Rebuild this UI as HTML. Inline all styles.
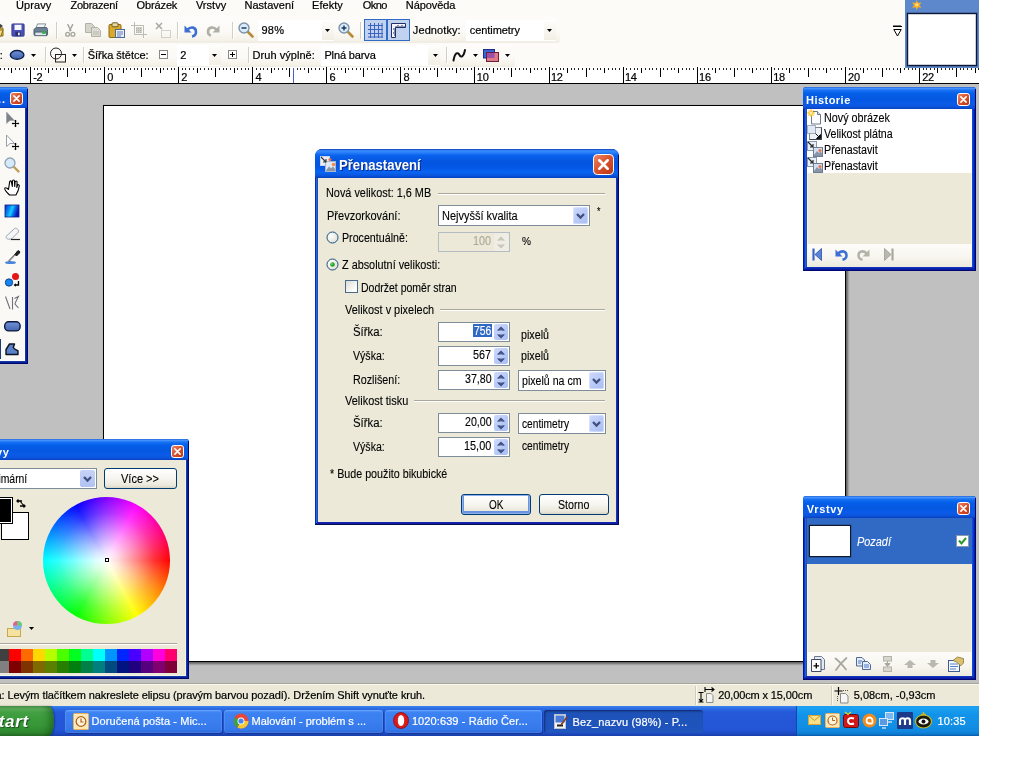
<!DOCTYPE html>
<html lang="cs"><head><meta charset="utf-8"><title>Paint.NET - Přenastavení</title>
<style>
html,body{margin:0;padding:0;background:#fff}
body{width:1024px;height:768px;position:relative;overflow:hidden;font-family:"Liberation Sans",sans-serif;font-size:11px;color:#000}
#bg{position:absolute;left:0;top:0;width:979px;height:736px;background:#c0c0c0}
#app{position:absolute;left:0;top:0;width:979px;height:736px;overflow:hidden;will-change:transform}
.a{position:absolute;box-sizing:border-box}
.t{position:absolute;white-space:nowrap}
.s{transform-origin:0 0}
svg{overflow:visible}
</style></head><body><div id="bg"></div><div id="app">
<div class="a" style="left:0px;top:0px;width:979px;height:67px;background:#fcfbf7;"></div>
<div class="a" style="left:0px;top:17px;width:560px;height:26px;background:linear-gradient(#fdfcfa 0%,#fbfaf6 55%,#f5f3ea 85%,#efede3 100%);border-radius:0 3px 3px 0;"></div>
<div class="a" style="left:0px;top:44px;width:515px;height:23px;background:linear-gradient(#fdfcfa 0%,#fbfaf6 55%,#f5f3ea 85%,#efede3 100%);border-radius:0 3px 3px 0;"></div>
<span class="t" style="left:15.97px;top:-2px;font-size:11px;line-height:14px;-webkit-text-stroke:0.2px;color:#000;letter-spacing:0.091px;">Úpravy</span>
<span class="t" style="left:70.45px;top:-2px;font-size:11px;line-height:14px;-webkit-text-stroke:0.2px;color:#000;letter-spacing:-0.235px;">Zobrazení</span>
<span class="t" style="left:136.52px;top:-2px;font-size:11px;line-height:14px;-webkit-text-stroke:0.2px;color:#000;letter-spacing:-0.119px;">Obrázek</span>
<span class="t" style="left:195.91px;top:-2px;font-size:11px;line-height:14px;-webkit-text-stroke:0.2px;color:#000;letter-spacing:0.024px;">Vrstvy</span>
<span class="t" style="left:244.5px;top:-2px;font-size:11px;line-height:14px;-webkit-text-stroke:0.2px;color:#000;letter-spacing:0.008px;">Nastavení</span>
<span class="t" style="left:312px;top:-2px;font-size:11px;line-height:14px;-webkit-text-stroke:0.2px;color:#000;letter-spacing:0.055px;">Efekty</span>
<span class="t" style="left:362.78px;top:-2px;font-size:11px;line-height:14px;-webkit-text-stroke:0.2px;color:#000;letter-spacing:-0.571px;">Okno</span>
<span class="t" style="left:405.75px;top:-2px;font-size:11px;line-height:14px;-webkit-text-stroke:0.2px;color:#000;letter-spacing:-0.061px;">Nápověda</span>
<svg class="a" style="left:-12px;top:22px;" width="16" height="16" viewBox="0 0 16 16"><path d="M1 4h5l1 2h8v8H1z" fill="#e8c44a" stroke="#8a6d1a"/><path d="M3 8h12l-2 6H1z" fill="#f6dc7a" stroke="#8a6d1a"/><path d="M11 1l4 3-4 3z" fill="#444"/></svg>
<svg class="a" style="left:11px;top:23px;" width="14" height="14" viewBox="0 0 16 16"><rect x="1" y="1" width="14" height="14" rx="1" fill="#4b4fb8" stroke="#34388f"/><rect x="4" y="2" width="8" height="6" fill="#f4f6fa"/><rect x="5" y="10" width="6" height="5" fill="#2b2e6e"/><rect x="8" y="11" width="2" height="3" fill="#e8e8f0"/></svg>
<svg class="a" style="left:33px;top:23px;" width="15.5" height="14.5" viewBox="0 0 17 16"><path d="M5 1h9l-2 5H3z" fill="#f2f4f6" stroke="#7b8794"/><path d="M1 7l3-2h11l1 2v6H1z" fill="#6d8196" stroke="#4a5c6e"/><rect x="2" y="10" width="13" height="4" fill="#dfe6ee" stroke="#4a5c6e"/><rect x="10" y="9" width="4" height="3" fill="#2fb24a"/></svg>
<div class="a" style="left:56px;top:22px;width:1px;height:17px;background:#d2cfc4;"></div>
<div class="a" style="left:57px;top:23px;width:1px;height:17px;background:#ffffff;"></div>
<svg class="a" style="left:64.5px;top:23.5px;" width="10.5" height="13.5" viewBox="0 0 12 15"><path d="M3 0l4 8M9 0L5 8" stroke="#a5a59b" stroke-width="1.6" fill="none"/><circle cx="3" cy="11.5" r="2.2" fill="none" stroke="#a5a59b" stroke-width="1.5"/><circle cx="9" cy="11.5" r="2.2" fill="none" stroke="#a5a59b" stroke-width="1.5"/></svg>
<svg class="a" style="left:85px;top:23px;" width="16" height="14" viewBox="0 0 16 14"><path d="M0.5 0.5h6l3 3v6h-9z" fill="#d6d5cc" stroke="#b2b1a7"/><path d="M6.5 4.5h6l3 3v6h-9z" fill="#dddcd3" stroke="#b2b1a7"/><path d="M8 9h6M8 11h6" stroke="#b9b8ae"/></svg>
<svg class="a" style="left:108px;top:22px;" width="17" height="16" viewBox="0 0 17 16"><rect x="1" y="2.5" width="12" height="13" rx="1" fill="#d9a928" stroke="#8e6b12"/><rect x="4" y="0.8" width="6" height="4" rx="1" fill="#e9d9a0" stroke="#6d5a2a"/><rect x="7.5" y="7.5" width="9" height="8" fill="#e8eef8" stroke="#4f6a96"/><path d="M9 10h6M9 12h6M9 14h4" stroke="#5f7fb5"/></svg>
<svg class="a" style="left:131px;top:22px;" width="16" height="16" viewBox="0 0 16 16"><path d="M3.5 0v12.5h12.5M0 3.5h12.5v12.5" stroke="#bdbcb2" fill="none" stroke-width="1"/><rect x="5" y="5" width="6" height="6" fill="#cfcec5"/><path d="M5 6.5h6M5 8.5h6M5 10.5h6" stroke="#b4b3a9" stroke-dasharray="1 1"/></svg>
<svg class="a" style="left:155px;top:22px;" width="16" height="16" viewBox="0 0 16 16"><path d="M1 1l6 6M7 1L1 7" stroke="#a9a89e" stroke-width="1.5"/><rect x="6.5" y="8.5" width="9" height="7" fill="none" stroke="#aaa99f" stroke-dasharray="1 1"/></svg>
<div class="a" style="left:177px;top:22px;width:1px;height:17px;background:#d2cfc4;"></div>
<div class="a" style="left:178px;top:23px;width:1px;height:17px;background:#ffffff;"></div>
<svg class="a" style="left:184px;top:23px;" width="14" height="14" viewBox="0 0 14 14"><path d="M3 7c4-4 9-3 9 2 0 2.5-1.5 4-4 4.5" fill="none" stroke="#3f6fd2" stroke-width="2.6"/><path d="M0.5 2.5v7h7z" fill="#3f6fd2"/></svg>
<svg class="a" style="left:206px;top:23px;" width="14" height="13" viewBox="0 0 14 13"><path d="M11 7C7 3 2 4 2 9c0 2 1 3 3 3.5" fill="none" stroke="#b0afa6" stroke-width="2.6"/><path d="M13.5 2.5v7h-7z" fill="#b0afa6"/></svg>
<div class="a" style="left:232px;top:22px;width:1px;height:17px;background:#d2cfc4;"></div>
<div class="a" style="left:233px;top:23px;width:1px;height:17px;background:#ffffff;"></div>
<svg class="a" style="left:238px;top:22px;" width="16" height="16" viewBox="0 0 16 16"><path d="M9.5 9.5l5 5" stroke="#b58a3a" stroke-width="2.6" stroke-linecap="round"/><circle cx="6" cy="6" r="5" fill="#d9ecfb" stroke="#7d93a8" stroke-width="1.4"/><path d="M3.5 6h5" stroke="#1c2d52" stroke-width="1.4"/></svg>
<div class="a" style="left:258px;top:20px;width:76px;height:21px;background:#ffffff;"></div>
<div class="a" style="left:322px;top:21px;width:12px;height:19px;background:linear-gradient(#fdfdfa,#f1efe5);"></div>
<span class="t" style="left:261.38px;top:23px;font-size:11px;line-height:14px;-webkit-text-stroke:0.2px;color:#000;letter-spacing:0.382px;">98%</span>
<svg class="a" style="left:325px;top:29px;" width="5" height="3" viewBox="0 0 5 3"><path d="M0 0h5L2.5 3z" fill="#000"/></svg>
<svg class="a" style="left:338px;top:22px;" width="16" height="16" viewBox="0 0 16 16"><path d="M9.5 9.5l5 5" stroke="#b58a3a" stroke-width="2.6" stroke-linecap="round"/><circle cx="6" cy="6" r="5" fill="#d9ecfb" stroke="#7d93a8" stroke-width="1.4"/><path d="M3.5 6h5" stroke="#1c2d52" stroke-width="1.4"/><path d="M6 3.5v5" stroke="#1c2d52" stroke-width="1.4"/></svg>
<div class="a" style="left:360px;top:22px;width:1px;height:17px;background:#d2cfc4;"></div>
<div class="a" style="left:361px;top:23px;width:1px;height:17px;background:#ffffff;"></div>
<div class="a" style="left:364px;top:19px;width:23px;height:22px;background:#c1d2ee;border:1px solid #316ac5;"></div>
<div class="a" style="left:387px;top:19px;width:23px;height:22px;background:#c1d2ee;border:1px solid #316ac5;"></div>
<svg class="a" style="left:368px;top:23px;" width="15" height="15" viewBox="0 0 15 15"><path d="M2.5 0v15M6.5 0v15M10.5 0v15M14 0v15M0 2.5h15M0 6.5h15M0 10.5h15M0 14h15" stroke="#3a62c0" stroke-width="1"/></svg>
<svg class="a" style="left:391px;top:23px;" width="15" height="15" viewBox="0 0 15 15"><path d="M0.5 0.5h14v4h-10v10h-4z" fill="#f4f6fb" stroke="#1f2f6a"/><path d="M5 3v1.5M7 2v2.5M9 3v1.5M11 2v2.5M13 3v1.5M2 6h2M3 8h1M2 10h2M3 12h1" stroke="#1f2f6a"/></svg>
<span class="t" style="left:412.82px;top:23px;font-size:11px;line-height:14px;-webkit-text-stroke:0.2px;color:#000;letter-spacing:0.098px;">Jednotky:</span>
<div class="a" style="left:466px;top:20px;width:90px;height:21px;background:#ffffff;"></div>
<div class="a" style="left:544px;top:21px;width:12px;height:19px;background:linear-gradient(#fdfdfa,#f1efe5);"></div>
<span class="t" style="left:469.79px;top:23px;font-size:11px;line-height:14px;-webkit-text-stroke:0.2px;color:#000;letter-spacing:-0.068px;">centimetry</span>
<svg class="a" style="left:547px;top:29px;" width="5" height="3" viewBox="0 0 5 3"><path d="M0 0h5L2.5 3z" fill="#000"/></svg>
<span class="t" style="left:-0.2px;top:48px;font-size:11px;line-height:14px;-webkit-text-stroke:0.2px;color:#000;">:</span>
<svg class="a" style="left:9px;top:49px;" width="17" height="12" viewBox="0 0 17 12"><defs><linearGradient id="gel" x1="0" y1="0" x2="0" y2="1"><stop offset="0" stop-color="#6f93d8"/><stop offset="1" stop-color="#3d5fa8"/></linearGradient></defs><ellipse cx="8.1" cy="5.9" rx="6.8" ry="4.4" fill="url(#gel)" stroke="#10204a" stroke-width="1.4"/></svg>
<svg class="a" style="left:31px;top:54px;" width="5" height="3" viewBox="0 0 5 3"><path d="M0 0h5L2.5 3z" fill="#000"/></svg>
<div class="a" style="left:45px;top:47px;width:1px;height:16px;background:#d2cfc4;"></div>
<div class="a" style="left:46px;top:48px;width:1px;height:16px;background:#ffffff;"></div>
<svg class="a" style="left:50px;top:47px;" width="16" height="16" viewBox="0 0 16 16"><circle cx="6" cy="6.5" r="5.5" fill="none" stroke="#222" stroke-width="1"/><rect x="5.5" y="7.5" width="10" height="7.5" fill="none" stroke="#222" stroke-width="1"/></svg>
<svg class="a" style="left:72px;top:54px;" width="5" height="3" viewBox="0 0 5 3"><path d="M0 0h5L2.5 3z" fill="#000"/></svg>
<div class="a" style="left:83px;top:47px;width:1px;height:16px;background:#d2cfc4;"></div>
<div class="a" style="left:84px;top:48px;width:1px;height:16px;background:#ffffff;"></div>
<span class="t" style="left:87.72px;top:48px;font-size:11px;line-height:14px;-webkit-text-stroke:0.2px;color:#000;letter-spacing:-0.027px;">Šířka štětce:</span>
<svg class="a" style="left:159px;top:50px;" width="9" height="9" viewBox="0 0 9 9"><rect x="0.5" y="0.5" width="8" height="8" fill="#fff" stroke="#8a8a84"/><path d="M2 4.5h5" stroke="#000"/></svg>
<div class="a" style="left:177px;top:45px;width:44px;height:21px;background:#ffffff;"></div>
<div class="a" style="left:209px;top:46px;width:12px;height:19px;background:linear-gradient(#fdfdfa,#f1efe5);"></div>
<span class="t" style="left:180.3px;top:48px;font-size:11px;line-height:14px;-webkit-text-stroke:0.2px;color:#000;">2</span>
<svg class="a" style="left:212px;top:54px;" width="5" height="3" viewBox="0 0 5 3"><path d="M0 0h5L2.5 3z" fill="#000"/></svg>
<svg class="a" style="left:228px;top:50px;" width="9" height="9" viewBox="0 0 9 9"><rect x="0.5" y="0.5" width="8" height="8" fill="#fff" stroke="#8a8a84"/><path d="M2 4.5h5" stroke="#000"/><path d="M4.5 2v5" stroke="#000"/></svg>
<div class="a" style="left:248px;top:47px;width:1px;height:16px;background:#d2cfc4;"></div>
<div class="a" style="left:249px;top:48px;width:1px;height:16px;background:#ffffff;"></div>
<span class="t" style="left:252.6px;top:48px;font-size:11px;line-height:14px;-webkit-text-stroke:0.2px;color:#000;letter-spacing:0.044px;">Druh výplně:</span>
<div class="a" style="left:321px;top:45px;width:119px;height:21px;background:#ffffff;"></div>
<div class="a" style="left:428px;top:46px;width:12px;height:19px;background:linear-gradient(#fdfdfa,#f1efe5);"></div>
<span class="t" style="left:324.4px;top:48px;font-size:11px;line-height:14px;-webkit-text-stroke:0.2px;color:#000;letter-spacing:-0.134px;">Plná barva</span>
<svg class="a" style="left:433px;top:54px;" width="5" height="3" viewBox="0 0 5 3"><path d="M0 0h5L2.5 3z" fill="#000"/></svg>
<div class="a" style="left:446px;top:47px;width:1px;height:16px;background:#d2cfc4;"></div>
<div class="a" style="left:447px;top:48px;width:1px;height:16px;background:#ffffff;"></div>
<svg class="a" style="left:452px;top:48px;" width="15" height="14" viewBox="0 0 15 14"><path d="M1.5 12.5C3 4 6 4 7.5 7s4 2 5.5-5" fill="none" stroke="#111" stroke-width="2" stroke-linecap="round"/></svg>
<svg class="a" style="left:473px;top:54px;" width="5" height="3" viewBox="0 0 5 3"><path d="M0 0h5L2.5 3z" fill="#000"/></svg>
<svg class="a" style="left:483px;top:49px;" width="16" height="13" viewBox="0 0 16 13"><rect x="0.5" y="0.5" width="11" height="8.5" fill="#3c63d8" stroke="#1b2f86"/><rect x="3.5" y="3.5" width="12" height="9" fill="#e07a86" stroke="#6b1f3a"/><rect x="4" y="4" width="7.5" height="5" fill="#9a4fa8"/></svg>
<svg class="a" style="left:505px;top:54px;" width="5" height="3" viewBox="0 0 5 3"><path d="M0 0h5L2.5 3z" fill="#000"/></svg>
<svg class="a" style="left:893px;top:25px;" width="9" height="12" viewBox="0 0 9 12"><path d="M0.5 0.5h8" stroke="#000" stroke-dasharray="1 1" stroke-width="1"/><path d="M0 1.5h9" stroke="#000" stroke-width="1"/><path d="M0.8 4.5h7.4L4.5 11z" fill="#fff" stroke="#000" stroke-width="1"/></svg>
<div class="a" style="left:0px;top:67px;width:979px;height:17px;background:#ffffff;"></div>
<div class="a" style="left:0px;top:83px;width:979px;height:1px;background:#000000;"></div>
<svg class="a" style="left:0px;top:67px;shape-rendering:crispEdges;" width="979" height="17" viewBox="0 0 979 17"><rect x="0" y="1" width="1" height="2" fill="#222"/><rect x="4" y="1" width="1" height="2" fill="#222"/><rect x="8" y="1" width="1" height="2" fill="#222"/><rect x="11" y="1" width="1" height="4.5"/><rect x="15" y="1" width="1" height="2" fill="#222"/><rect x="19" y="1" width="1" height="2" fill="#222"/><rect x="23" y="1" width="1" height="2" fill="#222"/><rect x="26" y="1" width="1" height="2" fill="#222"/><rect x="30" y="0" width="1" height="16"/><rect x="34" y="1" width="1" height="2" fill="#222"/><rect x="37" y="1" width="1" height="2" fill="#222"/><rect x="41" y="1" width="1" height="2" fill="#222"/><rect x="45" y="1" width="1" height="2" fill="#222"/><rect x="48" y="1" width="1" height="4.5"/><rect x="52" y="1" width="1" height="2" fill="#222"/><rect x="56" y="1" width="1" height="2" fill="#222"/><rect x="60" y="1" width="1" height="2" fill="#222"/><rect x="63" y="1" width="1" height="2" fill="#222"/><rect x="67" y="1" width="1" height="8.5"/><rect x="71" y="1" width="1" height="2" fill="#222"/><rect x="74" y="1" width="1" height="2" fill="#222"/><rect x="78" y="1" width="1" height="2" fill="#222"/><rect x="82" y="1" width="1" height="2" fill="#222"/><rect x="85" y="1" width="1" height="4.5"/><rect x="89" y="1" width="1" height="2" fill="#222"/><rect x="93" y="1" width="1" height="2" fill="#222"/><rect x="97" y="1" width="1" height="2" fill="#222"/><rect x="100" y="1" width="1" height="2" fill="#222"/><rect x="104" y="0" width="1" height="16"/><rect x="108" y="1" width="1" height="2" fill="#222"/><rect x="111" y="1" width="1" height="2" fill="#222"/><rect x="115" y="1" width="1" height="2" fill="#222"/><rect x="119" y="1" width="1" height="2" fill="#222"/><rect x="123" y="1" width="1" height="4.5"/><rect x="126" y="1" width="1" height="2" fill="#222"/><rect x="130" y="1" width="1" height="2" fill="#222"/><rect x="134" y="1" width="1" height="2" fill="#222"/><rect x="137" y="1" width="1" height="2" fill="#222"/><rect x="141" y="1" width="1" height="8.5"/><rect x="145" y="1" width="1" height="2" fill="#222"/><rect x="148" y="1" width="1" height="2" fill="#222"/><rect x="152" y="1" width="1" height="2" fill="#222"/><rect x="156" y="1" width="1" height="2" fill="#222"/><rect x="160" y="1" width="1" height="4.5"/><rect x="163" y="1" width="1" height="2" fill="#222"/><rect x="167" y="1" width="1" height="2" fill="#222"/><rect x="171" y="1" width="1" height="2" fill="#222"/><rect x="174" y="1" width="1" height="2" fill="#222"/><rect x="178" y="0" width="1" height="16"/><rect x="182" y="1" width="1" height="2" fill="#222"/><rect x="185" y="1" width="1" height="2" fill="#222"/><rect x="189" y="1" width="1" height="2" fill="#222"/><rect x="193" y="1" width="1" height="2" fill="#222"/><rect x="197" y="1" width="1" height="4.5"/><rect x="200" y="1" width="1" height="2" fill="#222"/><rect x="204" y="1" width="1" height="2" fill="#222"/><rect x="208" y="1" width="1" height="2" fill="#222"/><rect x="211" y="1" width="1" height="2" fill="#222"/><rect x="215" y="1" width="1" height="8.5"/><rect x="219" y="1" width="1" height="2" fill="#222"/><rect x="223" y="1" width="1" height="2" fill="#222"/><rect x="226" y="1" width="1" height="2" fill="#222"/><rect x="230" y="1" width="1" height="2" fill="#222"/><rect x="234" y="1" width="1" height="4.5"/><rect x="237" y="1" width="1" height="2" fill="#222"/><rect x="241" y="1" width="1" height="2" fill="#222"/><rect x="245" y="1" width="1" height="2" fill="#222"/><rect x="248" y="1" width="1" height="2" fill="#222"/><rect x="252" y="0" width="1" height="16"/><rect x="256" y="1" width="1" height="2" fill="#222"/><rect x="260" y="1" width="1" height="2" fill="#222"/><rect x="263" y="1" width="1" height="2" fill="#222"/><rect x="267" y="1" width="1" height="2" fill="#222"/><rect x="271" y="1" width="1" height="4.5"/><rect x="274" y="1" width="1" height="2" fill="#222"/><rect x="278" y="1" width="1" height="2" fill="#222"/><rect x="282" y="1" width="1" height="2" fill="#222"/><rect x="286" y="1" width="1" height="2" fill="#222"/><rect x="289" y="1" width="1" height="8.5"/><rect x="293" y="1" width="1" height="2" fill="#222"/><rect x="297" y="1" width="1" height="2" fill="#222"/><rect x="300" y="1" width="1" height="2" fill="#222"/><rect x="304" y="1" width="1" height="2" fill="#222"/><rect x="308" y="1" width="1" height="4.5"/><rect x="311" y="1" width="1" height="2" fill="#222"/><rect x="315" y="1" width="1" height="2" fill="#222"/><rect x="319" y="1" width="1" height="2" fill="#222"/><rect x="323" y="1" width="1" height="2" fill="#222"/><rect x="326" y="0" width="1" height="16"/><rect x="330" y="1" width="1" height="2" fill="#222"/><rect x="334" y="1" width="1" height="2" fill="#222"/><rect x="337" y="1" width="1" height="2" fill="#222"/><rect x="341" y="1" width="1" height="2" fill="#222"/><rect x="345" y="1" width="1" height="4.5"/><rect x="348" y="1" width="1" height="2" fill="#222"/><rect x="352" y="1" width="1" height="2" fill="#222"/><rect x="356" y="1" width="1" height="2" fill="#222"/><rect x="360" y="1" width="1" height="2" fill="#222"/><rect x="363" y="1" width="1" height="8.5"/><rect x="367" y="1" width="1" height="2" fill="#222"/><rect x="371" y="1" width="1" height="2" fill="#222"/><rect x="374" y="1" width="1" height="2" fill="#222"/><rect x="378" y="1" width="1" height="2" fill="#222"/><rect x="382" y="1" width="1" height="4.5"/><rect x="386" y="1" width="1" height="2" fill="#222"/><rect x="389" y="1" width="1" height="2" fill="#222"/><rect x="393" y="1" width="1" height="2" fill="#222"/><rect x="397" y="1" width="1" height="2" fill="#222"/><rect x="400" y="0" width="1" height="16"/><rect x="404" y="1" width="1" height="2" fill="#222"/><rect x="408" y="1" width="1" height="2" fill="#222"/><rect x="411" y="1" width="1" height="2" fill="#222"/><rect x="415" y="1" width="1" height="2" fill="#222"/><rect x="419" y="1" width="1" height="4.5"/><rect x="423" y="1" width="1" height="2" fill="#222"/><rect x="426" y="1" width="1" height="2" fill="#222"/><rect x="430" y="1" width="1" height="2" fill="#222"/><rect x="434" y="1" width="1" height="2" fill="#222"/><rect x="437" y="1" width="1" height="8.5"/><rect x="441" y="1" width="1" height="2" fill="#222"/><rect x="445" y="1" width="1" height="2" fill="#222"/><rect x="449" y="1" width="1" height="2" fill="#222"/><rect x="452" y="1" width="1" height="2" fill="#222"/><rect x="456" y="1" width="1" height="4.5"/><rect x="460" y="1" width="1" height="2" fill="#222"/><rect x="463" y="1" width="1" height="2" fill="#222"/><rect x="467" y="1" width="1" height="2" fill="#222"/><rect x="471" y="1" width="1" height="2" fill="#222"/><rect x="474" y="0" width="1" height="16"/><rect x="478" y="1" width="1" height="2" fill="#222"/><rect x="482" y="1" width="1" height="2" fill="#222"/><rect x="486" y="1" width="1" height="2" fill="#222"/><rect x="489" y="1" width="1" height="2" fill="#222"/><rect x="493" y="1" width="1" height="4.5"/><rect x="497" y="1" width="1" height="2" fill="#222"/><rect x="500" y="1" width="1" height="2" fill="#222"/><rect x="504" y="1" width="1" height="2" fill="#222"/><rect x="508" y="1" width="1" height="2" fill="#222"/><rect x="511" y="1" width="1" height="8.5"/><rect x="515" y="1" width="1" height="2" fill="#222"/><rect x="519" y="1" width="1" height="2" fill="#222"/><rect x="523" y="1" width="1" height="2" fill="#222"/><rect x="526" y="1" width="1" height="2" fill="#222"/><rect x="530" y="1" width="1" height="4.5"/><rect x="534" y="1" width="1" height="2" fill="#222"/><rect x="537" y="1" width="1" height="2" fill="#222"/><rect x="541" y="1" width="1" height="2" fill="#222"/><rect x="545" y="1" width="1" height="2" fill="#222"/><rect x="549" y="0" width="1" height="16"/><rect x="552" y="1" width="1" height="2" fill="#222"/><rect x="556" y="1" width="1" height="2" fill="#222"/><rect x="560" y="1" width="1" height="2" fill="#222"/><rect x="563" y="1" width="1" height="2" fill="#222"/><rect x="567" y="1" width="1" height="4.5"/><rect x="571" y="1" width="1" height="2" fill="#222"/><rect x="574" y="1" width="1" height="2" fill="#222"/><rect x="578" y="1" width="1" height="2" fill="#222"/><rect x="582" y="1" width="1" height="2" fill="#222"/><rect x="586" y="1" width="1" height="8.5"/><rect x="589" y="1" width="1" height="2" fill="#222"/><rect x="593" y="1" width="1" height="2" fill="#222"/><rect x="597" y="1" width="1" height="2" fill="#222"/><rect x="600" y="1" width="1" height="2" fill="#222"/><rect x="604" y="1" width="1" height="4.5"/><rect x="608" y="1" width="1" height="2" fill="#222"/><rect x="612" y="1" width="1" height="2" fill="#222"/><rect x="615" y="1" width="1" height="2" fill="#222"/><rect x="619" y="1" width="1" height="2" fill="#222"/><rect x="623" y="0" width="1" height="16"/><rect x="626" y="1" width="1" height="2" fill="#222"/><rect x="630" y="1" width="1" height="2" fill="#222"/><rect x="634" y="1" width="1" height="2" fill="#222"/><rect x="637" y="1" width="1" height="2" fill="#222"/><rect x="641" y="1" width="1" height="4.5"/><rect x="645" y="1" width="1" height="2" fill="#222"/><rect x="649" y="1" width="1" height="2" fill="#222"/><rect x="652" y="1" width="1" height="2" fill="#222"/><rect x="656" y="1" width="1" height="2" fill="#222"/><rect x="660" y="1" width="1" height="8.5"/><rect x="663" y="1" width="1" height="2" fill="#222"/><rect x="667" y="1" width="1" height="2" fill="#222"/><rect x="671" y="1" width="1" height="2" fill="#222"/><rect x="674" y="1" width="1" height="2" fill="#222"/><rect x="678" y="1" width="1" height="4.5"/><rect x="682" y="1" width="1" height="2" fill="#222"/><rect x="686" y="1" width="1" height="2" fill="#222"/><rect x="689" y="1" width="1" height="2" fill="#222"/><rect x="693" y="1" width="1" height="2" fill="#222"/><rect x="697" y="0" width="1" height="16"/><rect x="700" y="1" width="1" height="2" fill="#222"/><rect x="704" y="1" width="1" height="2" fill="#222"/><rect x="708" y="1" width="1" height="2" fill="#222"/><rect x="712" y="1" width="1" height="2" fill="#222"/><rect x="715" y="1" width="1" height="4.5"/><rect x="719" y="1" width="1" height="2" fill="#222"/><rect x="723" y="1" width="1" height="2" fill="#222"/><rect x="726" y="1" width="1" height="2" fill="#222"/><rect x="730" y="1" width="1" height="2" fill="#222"/><rect x="734" y="1" width="1" height="8.5"/><rect x="737" y="1" width="1" height="2" fill="#222"/><rect x="741" y="1" width="1" height="2" fill="#222"/><rect x="745" y="1" width="1" height="2" fill="#222"/><rect x="749" y="1" width="1" height="2" fill="#222"/><rect x="752" y="1" width="1" height="4.5"/><rect x="756" y="1" width="1" height="2" fill="#222"/><rect x="760" y="1" width="1" height="2" fill="#222"/><rect x="763" y="1" width="1" height="2" fill="#222"/><rect x="767" y="1" width="1" height="2" fill="#222"/><rect x="771" y="0" width="1" height="16"/><rect x="774" y="1" width="1" height="2" fill="#222"/><rect x="778" y="1" width="1" height="2" fill="#222"/><rect x="782" y="1" width="1" height="2" fill="#222"/><rect x="786" y="1" width="1" height="2" fill="#222"/><rect x="789" y="1" width="1" height="4.5"/><rect x="793" y="1" width="1" height="2" fill="#222"/><rect x="797" y="1" width="1" height="2" fill="#222"/><rect x="800" y="1" width="1" height="2" fill="#222"/><rect x="804" y="1" width="1" height="2" fill="#222"/><rect x="808" y="1" width="1" height="8.5"/><rect x="812" y="1" width="1" height="2" fill="#222"/><rect x="815" y="1" width="1" height="2" fill="#222"/><rect x="819" y="1" width="1" height="2" fill="#222"/><rect x="823" y="1" width="1" height="2" fill="#222"/><rect x="826" y="1" width="1" height="4.5"/><rect x="830" y="1" width="1" height="2" fill="#222"/><rect x="834" y="1" width="1" height="2" fill="#222"/><rect x="837" y="1" width="1" height="2" fill="#222"/><rect x="841" y="1" width="1" height="2" fill="#222"/><rect x="845" y="0" width="1" height="16"/><rect x="849" y="1" width="1" height="2" fill="#222"/><rect x="852" y="1" width="1" height="2" fill="#222"/><rect x="856" y="1" width="1" height="2" fill="#222"/><rect x="860" y="1" width="1" height="2" fill="#222"/><rect x="863" y="1" width="1" height="4.5"/><rect x="867" y="1" width="1" height="2" fill="#222"/><rect x="871" y="1" width="1" height="2" fill="#222"/><rect x="875" y="1" width="1" height="2" fill="#222"/><rect x="878" y="1" width="1" height="2" fill="#222"/><rect x="882" y="1" width="1" height="8.5"/><rect x="886" y="1" width="1" height="2" fill="#222"/><rect x="889" y="1" width="1" height="2" fill="#222"/><rect x="893" y="1" width="1" height="2" fill="#222"/><rect x="897" y="1" width="1" height="2" fill="#222"/><rect x="900" y="1" width="1" height="4.5"/><rect x="904" y="1" width="1" height="2" fill="#222"/><rect x="908" y="1" width="1" height="2" fill="#222"/><rect x="912" y="1" width="1" height="2" fill="#222"/><rect x="915" y="1" width="1" height="2" fill="#222"/><rect x="919" y="0" width="1" height="16"/><rect x="923" y="1" width="1" height="2" fill="#222"/><rect x="926" y="1" width="1" height="2" fill="#222"/><rect x="930" y="1" width="1" height="2" fill="#222"/><rect x="934" y="1" width="1" height="2" fill="#222"/><rect x="937" y="1" width="1" height="4.5"/><rect x="941" y="1" width="1" height="2" fill="#222"/><rect x="945" y="1" width="1" height="2" fill="#222"/><rect x="949" y="1" width="1" height="2" fill="#222"/><rect x="952" y="1" width="1" height="2" fill="#222"/><rect x="956" y="1" width="1" height="8.5"/><rect x="960" y="1" width="1" height="2" fill="#222"/><rect x="963" y="1" width="1" height="2" fill="#222"/><rect x="967" y="1" width="1" height="2" fill="#222"/><rect x="971" y="1" width="1" height="2" fill="#222"/><rect x="975" y="1" width="1" height="4.5"/><rect x="978" y="1" width="1" height="2" fill="#222"/></svg>
<span class="t" style="left:33.15px;top:71px;font-size:11px;line-height:12px;-webkit-text-stroke:0.2px;color:#000;letter-spacing:-0.2px;">-2</span>
<span class="t" style="left:107.25px;top:71px;font-size:11px;line-height:12px;-webkit-text-stroke:0.2px;color:#000;letter-spacing:-0.2px;">0</span>
<span class="t" style="left:181.28px;top:71px;font-size:11px;line-height:12px;-webkit-text-stroke:0.2px;color:#000;letter-spacing:-0.2px;">2</span>
<span class="t" style="left:255.48px;top:71px;font-size:11px;line-height:12px;-webkit-text-stroke:0.2px;color:#000;letter-spacing:-0.2px;">4</span>
<span class="t" style="left:329.44px;top:71px;font-size:11px;line-height:12px;-webkit-text-stroke:0.2px;color:#000;letter-spacing:-0.2px;">6</span>
<span class="t" style="left:403.55px;top:71px;font-size:11px;line-height:12px;-webkit-text-stroke:0.2px;color:#000;letter-spacing:-0.2px;">8</span>
<span class="t" style="left:476.8px;top:71px;font-size:11px;line-height:12px;-webkit-text-stroke:0.2px;color:#000;letter-spacing:-0.2px;">10</span>
<span class="t" style="left:550.88px;top:71px;font-size:11px;line-height:12px;-webkit-text-stroke:0.2px;color:#000;letter-spacing:-0.2px;">12</span>
<span class="t" style="left:624.94px;top:71px;font-size:11px;line-height:12px;-webkit-text-stroke:0.2px;color:#000;letter-spacing:-0.2px;">14</span>
<span class="t" style="left:699.06px;top:71px;font-size:11px;line-height:12px;-webkit-text-stroke:0.2px;color:#000;letter-spacing:-0.2px;">16</span>
<span class="t" style="left:773.13px;top:71px;font-size:11px;line-height:12px;-webkit-text-stroke:0.2px;color:#000;letter-spacing:-0.2px;">18</span>
<span class="t" style="left:848.08px;top:71px;font-size:11px;line-height:12px;-webkit-text-stroke:0.2px;color:#000;letter-spacing:-0.2px;">20</span>
<span class="t" style="left:922.16px;top:71px;font-size:11px;line-height:12px;-webkit-text-stroke:0.2px;color:#000;letter-spacing:-0.2px;">22</span>
<div class="a" style="left:292.5px;top:68px;width:1.3px;height:15px;background:#4a5fc8;"></div>
<div class="a" style="left:103px;top:105px;width:743px;height:557px;background:#ffffff;border:1px solid #000;box-shadow:1.5px 1.5px 2px rgba(0,0,0,0.48), -0.5px -0.5px 1.5px rgba(0,0,0,0.25);"></div>
<div class="a" style="left:0;top:87px;width:28px;height:277px;overflow:hidden">
<div class="a" style="left:-40px;top:-87px;width:68px;height:400px">
<div class="a" style="left:0px;top:87px;width:68px;height:277px;background:#0f4ad8;border-radius:3px 3px 0 0;"></div>
<div class="a" style="left:0px;top:87px;width:68px;height:21px;background:linear-gradient(#1f63d6 0%,#4a95ff 6%,#1a74f4 14%,#0560ea 28%,#0458e0 55%,#0a5be8 75%,#0c54dc 90%,#0741c0 100%);border-radius:3px 3px 0 0;"></div>
<div class="a" style="left:0px;top:108px;width:1px;height:256px;background:#001590;"></div>
<div class="a" style="left:1px;top:108px;width:1px;height:255px;background:#1050dc;"></div>
<div class="a" style="left:2px;top:108px;width:1px;height:254px;background:#2450b4;"></div>
<div class="a" style="left:65px;top:108px;width:1px;height:254px;background:#1838a4;"></div>
<div class="a" style="left:2px;top:361px;width:64px;height:1px;background:#1838a4;"></div>
<div class="a" style="left:66px;top:108px;width:1px;height:255px;background:#00229a;"></div>
<div class="a" style="left:1px;top:362px;width:66px;height:1px;background:#00229a;"></div>
<div class="a" style="left:67px;top:89px;width:1px;height:275px;background:#000870;"></div>
<div class="a" style="left:0px;top:363px;width:68px;height:1px;background:#000870;"></div>
<div class="a" style="left:3px;top:108px;width:62px;height:253px;background:#fbf9f5;"></div>
<div class="a" style="left:3px;top:108px;width:62px;height:253px;background:transparent;border:1px solid rgba(255,255,255,0.45);border-top:none;"></div>
</div></div>
<span class="t" style="left:-6px;top:92px;font-size:11px;line-height:14px;font-weight:bold;color:#fff;letter-spacing:1px;">...</span>
<svg class="a" style="left:10px;top:92px;" width="13" height="13" viewBox="0 0 13 13"><defs><linearGradient id="cb10_92" x1="0" y1="0" x2="1" y2="1"><stop offset="0" stop-color="#ee8a6c"/><stop offset="0.5" stop-color="#d9512c"/><stop offset="1" stop-color="#b83414"/></linearGradient></defs><rect x="0.5" y="0.5" width="12" height="12" rx="2.34" fill="url(#cb10_92)" stroke="#ffffff" stroke-width="1"/><path d="M3.9 3.9L9.1 9.1M9.1 3.9L3.9 9.1" stroke="#fff" stroke-width="1.625" stroke-linecap="round"/></svg>
<div class="a" style="left:-10px;top:339px;width:11px;height:20px;background:#c1d2ee;border:1px solid #1c3a7a;"></div>
<svg class="a" style="left:5px;top:111px;" width="16" height="17" viewBox="0 0 16 17"><path d="M1.5 1v11.5l3.5-3h4.5z" fill="#7d8288" stroke="#9aa0a6" stroke-width="0.6"/><path d="M10.5 9.5v6M7.5 12.5h6" stroke="#000" stroke-width="1.2"/><path d="M10.5 8.7l1.3 1.5h-2.6zM10.5 16.3l1.3-1.5h-2.6zM6.7 12.5l1.5-1.3v2.6zM14.3 12.5l-1.5-1.3v2.6z" fill="#000"/></svg>
<svg class="a" style="left:5px;top:134px;" width="16" height="17" viewBox="0 0 16 17"><path d="M1.5 1v11.5l3.5-3h4.5z" fill="#fbfbfb" stroke="#9aa0a6" stroke-width="1"/><path d="M10.5 9.5v6M7.5 12.5h6" stroke="#000" stroke-width="1.2"/><path d="M10.5 8.7l1.3 1.5h-2.6zM10.5 16.3l1.3-1.5h-2.6zM6.7 12.5l1.5-1.3v2.6zM14.3 12.5l-1.5-1.3v2.6z" fill="#000"/></svg>
<svg class="a" style="left:4px;top:157px;" width="16" height="16" viewBox="0 0 16 16"><path d="M10 10l4.5 4.5" stroke="#c49a52" stroke-width="2.4" stroke-linecap="round"/><circle cx="6" cy="6" r="5" fill="#d5eafa" stroke="#8fa3b5" stroke-width="1.3"/></svg>
<svg class="a" style="left:4px;top:180px;" width="17" height="16" viewBox="0 0 17 16"><path d="M4.5 9.5C3 8 1.5 7.5 0.8 8.2c-0.7 1 2.7 4.8 4.7 6.8h6.5c1.5-2.5 2.8-5.5 3.3-9 0.2-1.5-1.5-1.8-1.9-0.5l-0.6 2 0.3-5.5c0-1.4-1.8-1.4-2 0l-0.4 4.5-0.2-5.5c0-1.4-1.9-1.4-2 0l-0.2 5.5-0.9-4.7c-0.3-1.4-2-1-1.8 0.3z" fill="#fff" stroke="#000" stroke-width="1.1" stroke-linejoin="round"/></svg>
<svg class="a" style="left:5px;top:205px;" width="14" height="12" viewBox="0 0 14 12"><defs><linearGradient id="ggr" x1="0" y1="0" x2="1" y2="0.3"><stop offset="0" stop-color="#0a2ad0"/><stop offset="0.35" stop-color="#0b8bf0"/><stop offset="0.55" stop-color="#10d0ff"/><stop offset="0.75" stop-color="#0b6ae8"/><stop offset="1" stop-color="#0618b8"/></linearGradient></defs><rect x="0" y="0" width="14" height="12" fill="url(#ggr)" stroke="#0a1c8a" stroke-width="0.8"/></svg>
<svg class="a" style="left:5px;top:227px;" width="16" height="14" viewBox="0 0 16 14"><path d="M1 9.5L9.5 1.5c1.5-1 4.5 1 4 3.5L7 11.5c-2.5 1.5-6.5 0.5-6-2z" fill="#f4f6f8" stroke="#9aa4ae" stroke-width="1"/><path d="M6 12.5h9" stroke="#222" stroke-width="1.2"/></svg>
<svg class="a" style="left:4px;top:249px;" width="17" height="16" viewBox="0 0 17 16"><ellipse cx="6.5" cy="13.5" rx="5.5" ry="1.6" fill="#4a86e0"/><path d="M4.5 12.5l7.5-8" stroke="#444" stroke-width="1.2"/><path d="M4.5 12.5l7.5-8" stroke="#dfe8f0" stroke-width="0.5"/><path d="M11 5.5l2.5-3.5c1-1 3 0.5 2 2l-3 3z" fill="#222" stroke="#111"/></svg>
<svg class="a" style="left:4px;top:272px;" width="16" height="16" viewBox="0 0 16 16"><circle cx="11.5" cy="4.5" r="3.5" fill="#e61515"/><circle cx="5" cy="10.5" r="3.7" fill="#1587f0" stroke="#0a2f7a" stroke-width="0.8"/><path d="M14.5 9v4h-3.5" fill="none" stroke="#000" stroke-width="1.3"/><path d="M9.5 13l2.3-1.8v3.6z" fill="#000"/></svg>
<svg class="a" style="left:4px;top:295px;" width="16" height="16" viewBox="0 0 16 16"><path d="M1.5 1.5l4.5 12.5M8.5 2v12.5M10.5 3.5l4-2c-1.5 3-3 5-3.5 7.5l3.5 4" fill="none" stroke="#6d7378" stroke-width="1.1"/></svg>
<svg class="a" style="left:4px;top:321px;" width="17" height="11" viewBox="0 0 17 11"><defs><linearGradient id="grr" x1="0" y1="0" x2="0" y2="1"><stop offset="0" stop-color="#6f93d8"/><stop offset="1" stop-color="#4466b0"/></linearGradient></defs><rect x="0.7" y="0.7" width="15.4" height="9.2" rx="4" fill="url(#grr)" stroke="#0c1a40" stroke-width="1.4"/></svg>
<svg class="a" style="left:5px;top:343px;" width="15" height="13" viewBox="0 0 15 13"><path d="M1 11.5V6.5L4.5 1h5l-1.2 3.5c0.5 1.5 2.5 2 4.7 3.3V11.5z" fill="#5a82c8" stroke="#0c1220" stroke-width="1.4" stroke-linejoin="round"/></svg>
<div class="a" style="left:0;top:439px;width:189px;height:240px;overflow:hidden">
<div class="a" style="left:-20px;top:-439px;width:209px;height:700px">
<div class="a" style="left:0px;top:439px;width:209px;height:240px;background:#0f4ad8;border-radius:3px 3px 0 0;"></div>
<div class="a" style="left:0px;top:439px;width:209px;height:21px;background:linear-gradient(#1f63d6 0%,#4a95ff 6%,#1a74f4 14%,#0560ea 28%,#0458e0 55%,#0a5be8 75%,#0c54dc 90%,#0741c0 100%);border-radius:3px 3px 0 0;"></div>
<div class="a" style="left:0px;top:460px;width:1px;height:219px;background:#001590;"></div>
<div class="a" style="left:1px;top:460px;width:1px;height:218px;background:#1050dc;"></div>
<div class="a" style="left:2px;top:460px;width:1px;height:217px;background:#2450b4;"></div>
<div class="a" style="left:206px;top:460px;width:1px;height:217px;background:#1838a4;"></div>
<div class="a" style="left:2px;top:676px;width:205px;height:1px;background:#1838a4;"></div>
<div class="a" style="left:207px;top:460px;width:1px;height:218px;background:#00229a;"></div>
<div class="a" style="left:1px;top:677px;width:207px;height:1px;background:#00229a;"></div>
<div class="a" style="left:208px;top:441px;width:1px;height:238px;background:#000870;"></div>
<div class="a" style="left:0px;top:678px;width:209px;height:1px;background:#000870;"></div>
<div class="a" style="left:3px;top:460px;width:203px;height:216px;background:#ece9d8;"></div>
<div class="a" style="left:3px;top:460px;width:203px;height:216px;background:transparent;border:1px solid rgba(255,255,255,0.45);border-top:none;"></div>
</div></div>
<span class="t" style="left:-23.88px;top:445px;font-size:11px;line-height:14px;font-weight:bold;color:#fff;letter-spacing:0.55px;">Barvy</span>
<svg class="a" style="left:171px;top:445px;" width="13" height="13" viewBox="0 0 13 13"><defs><linearGradient id="cb171_445" x1="0" y1="0" x2="1" y2="1"><stop offset="0" stop-color="#ee8a6c"/><stop offset="0.5" stop-color="#d9512c"/><stop offset="1" stop-color="#b83414"/></linearGradient></defs><rect x="0.5" y="0.5" width="12" height="12" rx="2.34" fill="url(#cb171_445)" stroke="#ffffff" stroke-width="1"/><path d="M3.9 3.9L9.1 9.1M9.1 3.9L3.9 9.1" stroke="#fff" stroke-width="1.625" stroke-linecap="round"/></svg>
<div class="a" style="left:-30px;top:468px;width:127px;height:21px;background:#ffffff;border:1px solid #7f8c9a;"></div>
<div class="a" style="left:80px;top:470px;width:15px;height:17px;background:linear-gradient(#c6d3f8,#b0c2f2);border-radius:2px;"></div>
<svg class="a" style="left:83px;top:475.5px;" width="9" height="7" viewBox="0 0 9 7"><path d="M1 1l3.5 3.5L8 1" fill="none" stroke="#3f5080" stroke-width="2.3"/></svg>
<span class="t s" style="left:-11.65px;top:471px;font-size:12.5px;line-height:16px;-webkit-text-stroke:0.12px;color:#000;transform:scaleX(0.8312);">Primární</span>
<div class="a" style="left:104px;top:468px;width:73px;height:21px;background:linear-gradient(#ffffff 0%,#f6f5ef 50%,#ebe8dc 85%,#d9d5c5 100%);border:1px solid #003c74;border-radius:3px;"></div>
<span class="t s" style="left:120.9px;top:471px;font-size:12.5px;line-height:16px;-webkit-text-stroke:0.12px;color:#000;transform:scaleX(0.8796);">Více &gt;&gt;</span>
<div class="a" style="left:1px;top:512px;width:28px;height:28px;background:#ffffff;border:1px solid #000;"></div>
<div class="a" style="left:-10px;top:496.5px;width:23px;height:27px;background:#000000;border:1px solid #000;box-shadow:inset 0 0 0 1px #fff;"></div>
<svg class="a" style="left:16px;top:499px;" width="10" height="9" viewBox="0 0 10 9"><path d="M1 2h5M2.5 0.5L1 2l1.5 1.5M9 7H4M7.5 5.5L9 7 7.5 8.5" fill="none" stroke="#000" stroke-width="1.3"/><path d="M4 2l4 5" stroke="#000" stroke-width="1.2"/></svg>
<div class="a" style="left:43px;top:496.5px;width:127px;height:127px;border-radius:50%;background:conic-gradient(from 90deg,#ff0000,#ff8000 8%,#ffff00 17%,#80ff00 25%,#00ff00 33%,#00ff80 42%,#00ffff 50%,#0080ff 58%,#0000ff 67%,#8000ff 75%,#ff00ff 83%,#ff0080 92%,#ff0000)"></div>
<div class="a" style="left:43px;top:496.5px;width:127px;height:127px;border-radius:50%;background:radial-gradient(circle closest-side,#ffffff 0%,rgba(255,255,255,0.85) 18%,rgba(255,255,255,0.55) 45%,rgba(255,255,255,0.2) 75%,rgba(255,255,255,0) 100%)"></div>
<div class="a" style="left:105px;top:558px;width:4px;height:4px;background:#ffffff;border:1px solid #000;"></div>
<svg class="a" style="left:7px;top:620px;" width="16" height="17" viewBox="0 0 16 17"><rect x="0.5" y="8.5" width="13" height="8" fill="#f4e2a0" stroke="#c8a84a"/><circle cx="10.5" cy="5.5" r="4.5" fill="#7ab0f0"/><path d="M10.5 5.5L6 5.5A4.5 4.5 0 0 1 10.5 1z" fill="#e8608a"/><path d="M10.5 5.5V1A4.5 4.5 0 0 1 15 5.5z" fill="#6ad06a"/></svg>
<svg class="a" style="left:29px;top:627px;" width="5" height="3" viewBox="0 0 5 3"><path d="M0 0h5L2.5 3z" fill="#000"/></svg>
<div class="a" style="left:0px;top:643px;width:177px;height:1px;background:#aca899;"></div>
<div class="a" style="left:0px;top:644px;width:177px;height:1px;background:#ffffff;"></div>
<div class="a" style="left:-3px;top:649px;width:12px;height:12px;background:#404040;"></div>
<div class="a" style="left:-3px;top:661px;width:12px;height:12px;background:#808080;"></div>
<div class="a" style="left:9px;top:649px;width:12px;height:12px;background:#ff0000;"></div>
<div class="a" style="left:9px;top:661px;width:12px;height:12px;background:#7f0000;"></div>
<div class="a" style="left:21px;top:649px;width:12px;height:12px;background:#ff6a00;"></div>
<div class="a" style="left:21px;top:661px;width:12px;height:12px;background:#7f3300;"></div>
<div class="a" style="left:33px;top:649px;width:12px;height:12px;background:#ffd800;"></div>
<div class="a" style="left:33px;top:661px;width:12px;height:12px;background:#7f6a00;"></div>
<div class="a" style="left:45px;top:649px;width:12px;height:12px;background:#b6ff00;"></div>
<div class="a" style="left:45px;top:661px;width:12px;height:12px;background:#5b7f00;"></div>
<div class="a" style="left:57px;top:649px;width:12px;height:12px;background:#4cff00;"></div>
<div class="a" style="left:57px;top:661px;width:12px;height:12px;background:#267f00;"></div>
<div class="a" style="left:69px;top:649px;width:12px;height:12px;background:#00ff21;"></div>
<div class="a" style="left:69px;top:661px;width:12px;height:12px;background:#007f0e;"></div>
<div class="a" style="left:81px;top:649px;width:12px;height:12px;background:#00ff90;"></div>
<div class="a" style="left:81px;top:661px;width:12px;height:12px;background:#007f46;"></div>
<div class="a" style="left:93px;top:649px;width:12px;height:12px;background:#00ffff;"></div>
<div class="a" style="left:93px;top:661px;width:12px;height:12px;background:#007f7f;"></div>
<div class="a" style="left:105px;top:649px;width:12px;height:12px;background:#0094ff;"></div>
<div class="a" style="left:105px;top:661px;width:12px;height:12px;background:#004a7f;"></div>
<div class="a" style="left:117px;top:649px;width:12px;height:12px;background:#0026ff;"></div>
<div class="a" style="left:117px;top:661px;width:12px;height:12px;background:#00137f;"></div>
<div class="a" style="left:129px;top:649px;width:12px;height:12px;background:#4800ff;"></div>
<div class="a" style="left:129px;top:661px;width:12px;height:12px;background:#21007f;"></div>
<div class="a" style="left:141px;top:649px;width:12px;height:12px;background:#b200ff;"></div>
<div class="a" style="left:141px;top:661px;width:12px;height:12px;background:#57007f;"></div>
<div class="a" style="left:153px;top:649px;width:12px;height:12px;background:#ff00dc;"></div>
<div class="a" style="left:153px;top:661px;width:12px;height:12px;background:#7f006e;"></div>
<div class="a" style="left:165px;top:649px;width:12px;height:12px;background:#ff006e;"></div>
<div class="a" style="left:165px;top:661px;width:12px;height:12px;background:#7f0037;"></div>
<div class="a" style="left:803px;top:87px;width:173px;height:184px;background:#0f4ad8;border-radius:3px 3px 0 0;"></div>
<div class="a" style="left:803px;top:87px;width:173px;height:22px;background:linear-gradient(#1f63d6 0%,#4a95ff 6%,#1a74f4 14%,#0560ea 28%,#0458e0 55%,#0a5be8 75%,#0c54dc 90%,#0741c0 100%);border-radius:3px 3px 0 0;"></div>
<div class="a" style="left:803px;top:109px;width:1px;height:162px;background:#001590;"></div>
<div class="a" style="left:804px;top:109px;width:1px;height:161px;background:#0838c8;"></div>
<div class="a" style="left:805px;top:109px;width:1px;height:160px;background:#2060e0;"></div>
<div class="a" style="left:806px;top:109px;width:1px;height:159px;background:#2450a8;"></div>
<div class="a" style="left:972px;top:109px;width:1px;height:159px;background:#1848d0;"></div>
<div class="a" style="left:806px;top:267px;width:167px;height:1px;background:#1230b8;"></div>
<div class="a" style="left:973px;top:109px;width:1px;height:160px;background:#0038d8;"></div>
<div class="a" style="left:805px;top:268px;width:169px;height:1px;background:#0a24b0;"></div>
<div class="a" style="left:974px;top:109px;width:1px;height:161px;background:#0020a8;"></div>
<div class="a" style="left:804px;top:269px;width:171px;height:1px;background:#0818a0;"></div>
<div class="a" style="left:975px;top:89px;width:1px;height:182px;background:#000070;"></div>
<div class="a" style="left:803px;top:270px;width:173px;height:1px;background:#000870;"></div>
<div class="a" style="left:807px;top:109px;width:165px;height:158px;background:#ece9d8;"></div>
<div class="a" style="left:807px;top:109px;width:165px;height:158px;background:transparent;border:1px solid rgba(255,255,255,0.45);border-top:none;"></div>
<span class="t" style="left:806px;top:93px;font-size:11px;line-height:14px;font-weight:bold;color:#fff;letter-spacing:0.471px;">Historie</span>
<svg class="a" style="left:957px;top:93px;" width="13" height="13" viewBox="0 0 13 13"><defs><linearGradient id="cb957_93" x1="0" y1="0" x2="1" y2="1"><stop offset="0" stop-color="#ee8a6c"/><stop offset="0.5" stop-color="#d9512c"/><stop offset="1" stop-color="#b83414"/></linearGradient></defs><rect x="0.5" y="0.5" width="12" height="12" rx="2.34" fill="url(#cb957_93)" stroke="#ffffff" stroke-width="1"/><path d="M3.9 3.9L9.1 9.1M9.1 3.9L3.9 9.1" stroke="#fff" stroke-width="1.625" stroke-linecap="round"/></svg>
<div class="a" style="left:807px;top:109px;width:165px;height:64px;background:#ffffff;"></div>
<svg class="a" style="left:807px;top:109px;" width="16" height="16" viewBox="0 0 16 16"><path d="M4.5 2.5h6l3 3v9.5h-9z" fill="#fdfdfd" stroke="#6a7a8c"/><path d="M10.5 2.5v3h3" fill="#dfe6ee" stroke="#6a7a8c"/><circle cx="4" cy="4" r="2.6" fill="#ffb400"/><path d="M4 0v8M0 4h8M1.2 1.2l5.6 5.6M6.8 1.2L1.2 6.8" stroke="#ffc83a" stroke-width="1"/><circle cx="4" cy="4" r="1.5" fill="#fff3b0"/></svg>
<span class="t s" style="left:824.12px;top:110px;font-size:12.5px;line-height:16px;-webkit-text-stroke:0.12px;color:#000;transform:scaleX(0.8606);">Nový obrázek</span>
<svg class="a" style="left:807px;top:125px;" width="16" height="16" viewBox="0 0 16 16"><rect x="2.5" y="2.5" width="12" height="12" fill="#eef2f8" stroke="#7d8796"/><path d="M2.5 14.5h12v-12" fill="none" stroke="#3a4454"/><rect x="0.5" y="0.5" width="8" height="8" fill="#dfe8f4" stroke="#5d6b7c" stroke-dasharray="1 1"/><path d="M8.5 8.5l4.5 4.5M13.5 9.5v4h-4z" stroke="#111" fill="#111" stroke-width="1"/></svg>
<span class="t s" style="left:824.1px;top:126px;font-size:12.5px;line-height:16px;-webkit-text-stroke:0.12px;color:#000;transform:scaleX(0.8525);">Velikost plátna</span>
<svg class="a" style="left:807px;top:141px;" width="16" height="16" viewBox="0 0 16 16"><rect x="0.5" y="0.5" width="9" height="9" fill="#e8eff8" stroke="#8a9ab0"/><rect x="6.5" y="6.5" width="9" height="9" fill="#d4e0f0" stroke="#6a7c96"/><path d="M7 14l3-4 2 2 1.5-1.5 1.5 2v2.5H7z" fill="#8a94a4"/><circle cx="13" cy="9.5" r="1.6" fill="#e87a5a"/><path d="M1 1l5 5M6 3v3H3" stroke="#222" fill="none" stroke-width="1.1"/></svg>
<span class="t s" style="left:824.12px;top:142px;font-size:12.5px;line-height:16px;-webkit-text-stroke:0.12px;color:#000;transform:scaleX(0.8588);">Přenastavit</span>
<svg class="a" style="left:807px;top:157px;" width="16" height="16" viewBox="0 0 16 16"><rect x="0.5" y="0.5" width="9" height="9" fill="#e8eff8" stroke="#8a9ab0"/><rect x="6.5" y="6.5" width="9" height="9" fill="#d4e0f0" stroke="#6a7c96"/><path d="M7 14l3-4 2 2 1.5-1.5 1.5 2v2.5H7z" fill="#8a94a4"/><circle cx="13" cy="9.5" r="1.6" fill="#e87a5a"/><path d="M1 1l5 5M6 3v3H3" stroke="#222" fill="none" stroke-width="1.1"/></svg>
<span class="t s" style="left:824.12px;top:158px;font-size:12.5px;line-height:16px;-webkit-text-stroke:0.12px;color:#000;transform:scaleX(0.8588);">Přenastavit</span>
<div class="a" style="left:807px;top:244px;width:165px;height:23px;background:linear-gradient(#fdfcf9 0%,#f7f5ee 60%,#ece9dd 100%);"></div>
<svg class="a" style="left:812px;top:248px;" width="10" height="13" viewBox="0 0 10 13"><path d="M1.5 0.5v12" stroke="#3c64c8" stroke-width="2.2"/><path d="M9.5 0.5v12l-6.5-6z" fill="#5a82d8" stroke="#2c4ea8" stroke-width="0.8"/></svg>
<svg class="a" style="left:835px;top:247px;" width="13" height="14" viewBox="0 0 13 14"><path d="M3 6.5c4-3.5 8.5-2.5 8.5 2 0 2.3-1.5 3.7-4 4.2" fill="none" stroke="#3f6fd2" stroke-width="2.5"/><path d="M0.5 2.5v7h7z" fill="#3f6fd2"/></svg>
<svg class="a" style="left:857px;top:247px;" width="13" height="14" viewBox="0 0 13 14"><path d="M10 6.5C6 3 1.5 4 1.5 8.5c0 2.3 1.5 3.7 4 4.2" fill="none" stroke="#b4b3aa" stroke-width="2.5"/><path d="M12.5 2.5v7h-7z" fill="#b4b3aa"/></svg>
<svg class="a" style="left:884px;top:248px;" width="10" height="13" viewBox="0 0 10 13"><path d="M8.5 0.5v12" stroke="#a9a89f" stroke-width="2.2"/><path d="M0.5 0.5v12l6.5-6z" fill="#b9b8af" stroke="#9d9c93" stroke-width="0.8"/></svg>
<div class="a" style="left:803px;top:496px;width:173px;height:184px;background:#0f4ad8;border-radius:3px 3px 0 0;"></div>
<div class="a" style="left:803px;top:496px;width:173px;height:22px;background:linear-gradient(#1f63d6 0%,#4a95ff 6%,#1a74f4 14%,#0560ea 28%,#0458e0 55%,#0a5be8 75%,#0c54dc 90%,#0741c0 100%);border-radius:3px 3px 0 0;"></div>
<div class="a" style="left:803px;top:518px;width:1px;height:162px;background:#001590;"></div>
<div class="a" style="left:804px;top:518px;width:1px;height:161px;background:#0838c8;"></div>
<div class="a" style="left:805px;top:518px;width:1px;height:160px;background:#2060e0;"></div>
<div class="a" style="left:806px;top:518px;width:1px;height:159px;background:#2450a8;"></div>
<div class="a" style="left:972px;top:518px;width:1px;height:159px;background:#1848d0;"></div>
<div class="a" style="left:806px;top:676px;width:167px;height:1px;background:#1230b8;"></div>
<div class="a" style="left:973px;top:518px;width:1px;height:160px;background:#0038d8;"></div>
<div class="a" style="left:805px;top:677px;width:169px;height:1px;background:#0a24b0;"></div>
<div class="a" style="left:974px;top:518px;width:1px;height:161px;background:#0020a8;"></div>
<div class="a" style="left:804px;top:678px;width:171px;height:1px;background:#0818a0;"></div>
<div class="a" style="left:975px;top:498px;width:1px;height:182px;background:#000070;"></div>
<div class="a" style="left:803px;top:679px;width:173px;height:1px;background:#000870;"></div>
<div class="a" style="left:807px;top:518px;width:165px;height:158px;background:#ece9d8;"></div>
<div class="a" style="left:807px;top:518px;width:165px;height:158px;background:transparent;border:1px solid rgba(255,255,255,0.45);border-top:none;"></div>
<span class="t" style="left:806.86px;top:502px;font-size:11px;line-height:14px;font-weight:bold;color:#fff;letter-spacing:0.642px;">Vrstvy</span>
<svg class="a" style="left:957px;top:502px;" width="13" height="13" viewBox="0 0 13 13"><defs><linearGradient id="cb957_502" x1="0" y1="0" x2="1" y2="1"><stop offset="0" stop-color="#ee8a6c"/><stop offset="0.5" stop-color="#d9512c"/><stop offset="1" stop-color="#b83414"/></linearGradient></defs><rect x="0.5" y="0.5" width="12" height="12" rx="2.34" fill="url(#cb957_502)" stroke="#ffffff" stroke-width="1"/><path d="M3.9 3.9L9.1 9.1M9.1 3.9L3.9 9.1" stroke="#fff" stroke-width="1.625" stroke-linecap="round"/></svg>
<div class="a" style="left:807px;top:518px;width:165px;height:46px;background:#316ac5;"></div>
<div class="a" style="left:809px;top:525px;width:42px;height:32px;background:#ffffff;border:1px solid #10182c;box-shadow:0 0 0 0.5px rgba(0,0,0,0.3);"></div>
<span class="t s" style="left:857.31px;top:534px;font-size:12.5px;line-height:16px;font-style:italic;-webkit-text-stroke:0.1px;color:#fff;transform:scaleX(0.8717);">Pozadí</span>
<div class="a" style="left:956px;top:535px;width:13px;height:12px;background:#ffffff;border:1px solid #8a99b0;"></div>
<svg class="a" style="left:958px;top:537px;" width="9" height="8" viewBox="0 0 9 8"><path d="M1 3.5l2.5 3L8 1" fill="none" stroke="#2a9a2a" stroke-width="2"/></svg>
<div class="a" style="left:807px;top:652px;width:165px;height:24px;background:linear-gradient(#fdfcf9 0%,#f7f5ee 60%,#ece9dd 100%);"></div>
<svg class="a" style="left:811px;top:656px;" width="14" height="16" viewBox="0 0 14 16"><path d="M3.5 0.5h7l3 3v10h-10z" fill="#e4e9f2" stroke="#6a7890"/><path d="M0.5 3.5h9.5v12h-9.5z" fill="#fdfdfd" stroke="#3c4a66"/><path d="M5.3 7v5.5M2.5 9.8h5.5" stroke="#000" stroke-width="1.3"/></svg>
<svg class="a" style="left:834px;top:657px;" width="14" height="14" viewBox="0 0 14 14"><path d="M1.5 1.5c4 3 7 6.5 10.5 11M12.5 1c-4 3.5-7.5 7-10.5 12" stroke="#a9a89e" stroke-width="1.8" fill="none" stroke-linecap="round"/></svg>
<svg class="a" style="left:856px;top:657px;" width="15" height="13" viewBox="0 0 15 13"><path d="M0.5 0.5h5.5l2.5 2.5v6h-8z" fill="#e8eef8" stroke="#4f6a96"/><path d="M6.5 4.5h5l3 3v5h-8z" fill="#e8eef8" stroke="#4f6a96"/><path d="M8 8h5M8 10h5" stroke="#4a78c8"/><path d="M2 4h4M2 6h3" stroke="#4a78c8"/></svg>
<svg class="a" style="left:883px;top:656px;" width="9" height="16" viewBox="0 0 9 16"><rect x="0.5" y="0.5" width="8" height="4.5" fill="#d8d7ce" stroke="#b4b3a9"/><rect x="0.5" y="11" width="8" height="4.5" fill="#d8d7ce" stroke="#b4b3a9"/><path d="M4.5 5v4M2 7.5l2.5 3 2.5-3z" fill="#a9a89e" stroke="#a9a89e"/></svg>
<svg class="a" style="left:904px;top:660px;" width="12" height="8" viewBox="0 0 12 8"><path d="M6 0L12 5H8.5V8H3.5V5H0z" fill="#b9b8af"/></svg>
<svg class="a" style="left:927px;top:660px;" width="12" height="8" viewBox="0 0 12 8"><path d="M6 8L12 3H8.5V0H3.5V3H0z" fill="#b9b8af"/></svg>
<svg class="a" style="left:948px;top:656px;" width="16" height="16" viewBox="0 0 16 16"><rect x="0.5" y="4.5" width="11" height="11" fill="#f3f6fb" stroke="#3c5a96"/><path d="M2 8h8M2 10.5h8M2 13h6" stroke="#5a82c8"/><path d="M5 4.5L9.5 1l6 1.5v4.5l-3 3-3-3.5z" fill="#d8c070" stroke="#8a7830" stroke-width="0.8"/></svg>
<div class="a" style="left:315px;top:149px;width:304px;height:376px;background:#0a30b0;border-radius:7px 7px 0 0;"></div>
<div class="a" style="left:315px;top:149px;width:304px;height:29px;background:linear-gradient(#0a3eb0 0%,#3a8cff 6%,#2a80fa 12%,#0a62ec 22%,#0454e0 45%,#0458e6 65%,#0a64f2 80%,#0a58e0 90%,#0540c0 100%);border-radius:7px 7px 0 0;"></div>
<div class="a" style="left:315px;top:178px;width:1px;height:347px;background:#0b2fa5;"></div>
<div class="a" style="left:316px;top:178px;width:1px;height:346px;background:#2b62e0;"></div>
<div class="a" style="left:317px;top:178px;width:1px;height:345px;background:#154cbc;"></div>
<div class="a" style="left:616px;top:178px;width:1px;height:345px;background:#1535b4;"></div>
<div class="a" style="left:617px;top:178px;width:1px;height:346px;background:#0a20a0;"></div>
<div class="a" style="left:618px;top:155px;width:1px;height:370px;background:#000860;"></div>
<div class="a" style="left:317px;top:522px;width:300px;height:1px;background:#1225b0;"></div>
<div class="a" style="left:316px;top:523px;width:302px;height:1px;background:#141aa8;"></div>
<div class="a" style="left:315px;top:524px;width:304px;height:1px;background:#001050;"></div>
<div class="a" style="left:318px;top:178px;width:298px;height:344px;background:#ece9d8;"></div>
<svg class="a" style="left:320px;top:156px;" width="16" height="16" viewBox="0 0 16 16"><rect x="0.5" y="0.5" width="9" height="9" fill="#e8eff8" stroke="#c8d4e6"/><rect x="5.5" y="5.5" width="10" height="10" fill="#dfe8f4" stroke="#a8b8d0"/><path d="M6 14.5l3-4 2 2 2-2 2 2.5v2H6z" fill="#8a94a4"/><circle cx="13.5" cy="8.5" r="1.7" fill="#f08a4a"/><path d="M1 1l5 5M6 3v3H3" stroke="#333" fill="none" stroke-width="1.1"/><circle cx="10" cy="3.5" r="1.5" fill="#e86a4a"/></svg>
<span class="t s" style="left:338.86px;top:156px;font-size:14px;line-height:18px;font-weight:bold;color:#fff;transform:scaleX(0.9375);text-shadow:1px 1px 0 #0a2a88;">Přenastavení</span>
<svg class="a" style="left:593px;top:154px;" width="21" height="21" viewBox="0 0 21 21"><defs><linearGradient id="cb593_154" x1="0" y1="0" x2="1" y2="1"><stop offset="0" stop-color="#ee8a6c"/><stop offset="0.5" stop-color="#d9512c"/><stop offset="1" stop-color="#b83414"/></linearGradient></defs><rect x="0.5" y="0.5" width="20" height="20" rx="3.78" fill="url(#cb593_154)" stroke="#ffffff" stroke-width="1"/><path d="M6.3 6.3L14.7 14.7M14.7 6.3L6.3 14.7" stroke="#fff" stroke-width="2.625" stroke-linecap="round"/></svg>
<span class="t s" style="left:326.11px;top:185px;font-size:12.5px;line-height:16px;-webkit-text-stroke:0.12px;color:#000;transform:scaleX(0.8699);">Nová velikost: 1,6 MB</span>
<div class="a" style="left:438px;top:193px;width:167px;height:1px;background:#aca899;"></div>
<div class="a" style="left:438px;top:194px;width:167px;height:1px;background:#ffffff;"></div>
<span class="t s" style="left:327.1px;top:208px;font-size:12.5px;line-height:16px;-webkit-text-stroke:0.12px;color:#000;transform:scaleX(0.8815);">Převzorkování:</span>
<div class="a" style="left:438px;top:205px;width:152px;height:21px;background:#ffffff;border:1px solid #7f8c9a;"></div>
<div class="a" style="left:573px;top:207px;width:15px;height:17px;background:linear-gradient(135deg,#cfdafc 0%,#b6c8f6 60%,#a9bdf2 100%);border-radius:2px;box-shadow:inset 0 0 0 1px rgba(255,255,255,0.35);"></div>
<svg class="a" style="left:576px;top:212.5px;" width="9" height="7" viewBox="0 0 9 7"><path d="M1 1l3.5 3.5L8 1" fill="none" stroke="#3f5080" stroke-width="2.3"/></svg>
<span class="t s" style="left:442.11px;top:208px;font-size:12.5px;line-height:16px;-webkit-text-stroke:0.12px;color:#000;transform:scaleX(0.8774);">Nejvyšší kvalita</span>
<span class="t s" style="left:596.73px;top:204px;font-size:10px;line-height:16px;-webkit-text-stroke:0.12px;color:#000;transform:scaleX(0.88);">*</span>
<svg class="a" style="left:325.7px;top:230.9px;" width="13" height="13" viewBox="0 0 13 13"><defs><radialGradient id="rg237" cx="0.35" cy="0.35" r="0.8"><stop offset="0" stop-color="#ffffff"/><stop offset="1" stop-color="#dcdcd2"/></radialGradient></defs><circle cx="6.5" cy="6.5" r="5.5" fill="url(#rg237)" stroke="#1c5180" stroke-width="1"/></svg>
<span class="t s" style="left:342.13px;top:230px;font-size:12.5px;line-height:16px;-webkit-text-stroke:0.12px;color:#000;transform:scaleX(0.8536);">Procentuálně:</span>
<div class="a" style="left:438px;top:232px;width:72px;height:20px;background:#ece9d8;border:1px solid #b4bcc4;"></div>
<div class="a" style="left:494px;top:233px;width:15px;height:18px;background:#f0eee4;border-radius:2px;"></div>
<svg class="a" style="left:497px;top:235.5px;" width="8" height="13" viewBox="0 0 8 13"><path d="M0 4.4L4 0.4L8 4.4H6L4 3L2 4.4zM0 8.4L4 12.4L8 8.4H6L4 9.8L2 8.4z" fill="#c9c7ba"/><path d="M0.5 4.4L4 0.9L7.5 4.4zM0.5 8.4L4 11.9L7.5 8.4z" fill="#c9c7ba" opacity="0.85"/></svg>
<span class="t s" style="left:473.14px;top:233px;font-size:12.5px;line-height:16px;-webkit-text-stroke:0.12px;color:#aca899;transform:scaleX(0.8609);">100</span>
<span class="t s" style="left:521.88px;top:233px;font-size:11.5px;line-height:16px;-webkit-text-stroke:0.12px;color:#000;transform:scaleX(0.88);">%</span>
<svg class="a" style="left:325.7px;top:257.9px;" width="13" height="13" viewBox="0 0 13 13"><defs><radialGradient id="rg264" cx="0.35" cy="0.35" r="0.8"><stop offset="0" stop-color="#ffffff"/><stop offset="1" stop-color="#dcdcd2"/></radialGradient></defs><circle cx="6.5" cy="6.5" r="5.5" fill="url(#rg264)" stroke="#1c5180" stroke-width="1"/><circle cx="6.5" cy="6.5" r="2.3" fill="#21a121"/><circle cx="6" cy="6" r="1" fill="#6fd86f"/></svg>
<span class="t s" style="left:341.85px;top:257px;font-size:12.5px;line-height:16px;-webkit-text-stroke:0.12px;color:#000;transform:scaleX(0.8674);">Z absolutní velikosti:</span>
<div class="a" style="left:345px;top:280px;width:13px;height:13px;background:linear-gradient(135deg,#dcdcd4 0%,#ffffff 80%);border:1px solid #4a6a8a;"></div>
<span class="t s" style="left:361.14px;top:280px;font-size:12.5px;line-height:16px;-webkit-text-stroke:0.12px;color:#000;transform:scaleX(0.8395);">Dodržet poměr stran</span>
<span class="t s" style="left:344.7px;top:302px;font-size:12.5px;line-height:16px;-webkit-text-stroke:0.12px;color:#000;transform:scaleX(0.8729);">Velikost v pixelech</span>
<div class="a" style="left:439.5px;top:309px;width:165.5px;height:1px;background:#aca899;"></div>
<div class="a" style="left:439.5px;top:310px;width:165.5px;height:1px;background:#ffffff;"></div>
<span class="t s" style="left:353.09px;top:324px;font-size:12.5px;line-height:16px;-webkit-text-stroke:0.12px;color:#000;transform:scaleX(0.909);">Šířka:</span>
<div class="a" style="left:438px;top:322px;width:72px;height:20px;background:#ffffff;border:1px solid #7f8c9a;"></div>
<div class="a" style="left:494px;top:324px;width:14px;height:16px;background:linear-gradient(135deg,#cfdafc 0%,#b6c8f6 60%,#a9bdf2 100%);border-radius:2px;"></div>
<svg class="a" style="left:497px;top:325.5px;" width="8" height="13" viewBox="0 0 8 13"><path d="M0 4.4L4 0.4L8 4.4H6L4 3L2 4.4zM0 8.4L4 12.4L8 8.4H6L4 9.8L2 8.4z" fill="#3f5286"/><path d="M0.5 4.4L4 0.9L7.5 4.4zM0.5 8.4L4 11.9L7.5 8.4z" fill="#3f5286" opacity="0.85"/></svg>
<div class="a" style="left:473px;top:324px;width:19px;height:13px;background:#316ac5;"></div>
<span class="t s" style="left:473.76px;top:323px;font-size:12.5px;line-height:16px;-webkit-text-stroke:0.12px;color:#fff;transform:scaleX(0.8326);">756</span>
<span class="t s" style="left:521.14px;top:327px;font-size:12.5px;line-height:16px;-webkit-text-stroke:0.12px;color:#000;transform:scaleX(0.8571);">pixelů</span>
<span class="t s" style="left:353.4px;top:348px;font-size:12.5px;line-height:16px;-webkit-text-stroke:0.12px;color:#000;transform:scaleX(0.8473);">Výška:</span>
<div class="a" style="left:438px;top:346px;width:72px;height:20px;background:#ffffff;border:1px solid #7f8c9a;"></div>
<div class="a" style="left:494px;top:348px;width:14px;height:16px;background:linear-gradient(135deg,#cfdafc 0%,#b6c8f6 60%,#a9bdf2 100%);border-radius:2px;"></div>
<svg class="a" style="left:497px;top:349.5px;" width="8" height="13" viewBox="0 0 8 13"><path d="M0 4.4L4 0.4L8 4.4H6L4 3L2 4.4zM0 8.4L4 12.4L8 8.4H6L4 9.8L2 8.4z" fill="#3f5286"/><path d="M0.5 4.4L4 0.9L7.5 4.4zM0.5 8.4L4 11.9L7.5 8.4z" fill="#3f5286" opacity="0.85"/></svg>
<span class="t s" style="left:473.13px;top:347px;font-size:12.5px;line-height:16px;-webkit-text-stroke:0.12px;color:#000;transform:scaleX(0.863);">567</span>
<span class="t s" style="left:521.14px;top:348px;font-size:12.5px;line-height:16px;-webkit-text-stroke:0.12px;color:#000;transform:scaleX(0.8571);">pixelů</span>
<span class="t s" style="left:353.12px;top:372px;font-size:12.5px;line-height:16px;-webkit-text-stroke:0.12px;color:#000;transform:scaleX(0.8602);">Rozlišení:</span>
<div class="a" style="left:438px;top:370px;width:72px;height:20px;background:#ffffff;border:1px solid #7f8c9a;"></div>
<div class="a" style="left:494px;top:372px;width:14px;height:16px;background:linear-gradient(135deg,#cfdafc 0%,#b6c8f6 60%,#a9bdf2 100%);border-radius:2px;"></div>
<svg class="a" style="left:497px;top:373.5px;" width="8" height="13" viewBox="0 0 8 13"><path d="M0 4.4L4 0.4L8 4.4H6L4 3L2 4.4zM0 8.4L4 12.4L8 8.4H6L4 9.8L2 8.4z" fill="#3f5286"/><path d="M0.5 4.4L4 0.9L7.5 4.4zM0.5 8.4L4 11.9L7.5 8.4z" fill="#3f5286" opacity="0.85"/></svg>
<span class="t s" style="left:464.73px;top:371px;font-size:12.5px;line-height:16px;-webkit-text-stroke:0.12px;color:#000;transform:scaleX(0.8515);">37,80</span>
<div class="a" style="left:518px;top:370px;width:88px;height:21px;background:#ffffff;border:1px solid #7f8c9a;"></div>
<div class="a" style="left:589px;top:372px;width:15px;height:17px;background:linear-gradient(135deg,#cfdafc 0%,#b6c8f6 60%,#a9bdf2 100%);border-radius:2px;box-shadow:inset 0 0 0 1px rgba(255,255,255,0.35);"></div>
<svg class="a" style="left:592px;top:377.5px;" width="9" height="7" viewBox="0 0 9 7"><path d="M1 1l3.5 3.5L8 1" fill="none" stroke="#3f5080" stroke-width="2.3"/></svg>
<span class="t s" style="left:521.75px;top:373px;font-size:12.5px;line-height:16px;-webkit-text-stroke:0.12px;color:#000;transform:scaleX(0.85);">pixelů na cm</span>
<span class="t s" style="left:344.7px;top:393px;font-size:12.5px;line-height:16px;-webkit-text-stroke:0.12px;color:#000;transform:scaleX(0.8759);">Velikost tisku</span>
<div class="a" style="left:414px;top:400px;width:191px;height:1px;background:#aca899;"></div>
<div class="a" style="left:414px;top:401px;width:191px;height:1px;background:#ffffff;"></div>
<span class="t s" style="left:353.09px;top:415px;font-size:12.5px;line-height:16px;-webkit-text-stroke:0.12px;color:#000;transform:scaleX(0.909);">Šířka:</span>
<div class="a" style="left:438px;top:413px;width:72px;height:20px;background:#ffffff;border:1px solid #7f8c9a;"></div>
<div class="a" style="left:494px;top:415px;width:14px;height:16px;background:linear-gradient(135deg,#cfdafc 0%,#b6c8f6 60%,#a9bdf2 100%);border-radius:2px;"></div>
<svg class="a" style="left:497px;top:416.5px;" width="8" height="13" viewBox="0 0 8 13"><path d="M0 4.4L4 0.4L8 4.4H6L4 3L2 4.4zM0 8.4L4 12.4L8 8.4H6L4 9.8L2 8.4z" fill="#3f5286"/><path d="M0.5 4.4L4 0.9L7.5 4.4zM0.5 8.4L4 11.9L7.5 8.4z" fill="#3f5286" opacity="0.85"/></svg>
<span class="t s" style="left:464.76px;top:414px;font-size:12.5px;line-height:16px;-webkit-text-stroke:0.12px;color:#000;transform:scaleX(0.8506);">20,00</span>
<div class="a" style="left:518px;top:413px;width:88px;height:21px;background:#ffffff;border:1px solid #7f8c9a;"></div>
<div class="a" style="left:589px;top:415px;width:15px;height:17px;background:linear-gradient(135deg,#cfdafc 0%,#b6c8f6 60%,#a9bdf2 100%);border-radius:2px;box-shadow:inset 0 0 0 1px rgba(255,255,255,0.35);"></div>
<svg class="a" style="left:592px;top:420.5px;" width="9" height="7" viewBox="0 0 9 7"><path d="M1 1l3.5 3.5L8 1" fill="none" stroke="#3f5080" stroke-width="2.3"/></svg>
<span class="t s" style="left:522.3px;top:416px;font-size:12.5px;line-height:16px;-webkit-text-stroke:0.12px;color:#000;transform:scaleX(0.8167);">centimetry</span>
<span class="t s" style="left:353.4px;top:439px;font-size:12.5px;line-height:16px;-webkit-text-stroke:0.12px;color:#000;transform:scaleX(0.8473);">Výška:</span>
<div class="a" style="left:438px;top:437px;width:72px;height:20px;background:#ffffff;border:1px solid #7f8c9a;"></div>
<div class="a" style="left:494px;top:439px;width:14px;height:16px;background:linear-gradient(135deg,#cfdafc 0%,#b6c8f6 60%,#a9bdf2 100%);border-radius:2px;"></div>
<svg class="a" style="left:497px;top:440.5px;" width="8" height="13" viewBox="0 0 8 13"><path d="M0 4.4L4 0.4L8 4.4H6L4 3L2 4.4zM0 8.4L4 12.4L8 8.4H6L4 9.8L2 8.4z" fill="#3f5286"/><path d="M0.5 4.4L4 0.9L7.5 4.4zM0.5 8.4L4 11.9L7.5 8.4z" fill="#3f5286" opacity="0.85"/></svg>
<span class="t s" style="left:464.13px;top:438px;font-size:12.5px;line-height:16px;-webkit-text-stroke:0.12px;color:#000;transform:scaleX(0.8709);">15,00</span>
<span class="t s" style="left:521.8px;top:438px;font-size:12.5px;line-height:16px;-webkit-text-stroke:0.12px;color:#000;transform:scaleX(0.8167);">centimetry</span>
<span class="t s" style="left:329.83px;top:466px;font-size:12.5px;line-height:16px;-webkit-text-stroke:0.12px;color:#000;transform:scaleX(0.8571);">* Bude použito bikubické</span>
<div class="a" style="left:461px;top:494px;width:70px;height:21px;background:linear-gradient(#ffffff 0%,#f6f5ef 50%,#ebe8dc 85%,#d9d5c5 100%);border:1px solid #003c74;border-radius:3px;box-shadow:inset 0 0 0 1px #8fb1ee, inset 0 -1px 0 2px #6c93e0;"></div>
<span class="t s" style="left:488.78px;top:497px;font-size:12.5px;line-height:16px;-webkit-text-stroke:0.12px;color:#000;transform:scaleX(0.7986);">OK</span>
<div class="a" style="left:539px;top:494px;width:70px;height:21px;background:linear-gradient(#ffffff 0%,#f6f5ef 50%,#ebe8dc 85%,#d9d5c5 100%);border:1px solid #003c74;border-radius:3px;"></div>
<span class="t s" style="left:557.64px;top:497px;font-size:12.5px;line-height:16px;-webkit-text-stroke:0.12px;color:#000;transform:scaleX(0.8537);">Storno</span>
<div class="a" style="left:0px;top:680px;width:979px;height:4px;background:#c0c0c0;"></div>
<div class="a" style="left:0px;top:683px;width:979px;height:23px;background:#ece9d8;border-top:1px solid #a9a698;"></div>
<div class="a" style="left:0px;top:684px;width:979px;height:1px;background:#f8f7f0;"></div>
<span class="t" style="left:-28px;top:688px;font-size:11px;line-height:14px;-webkit-text-stroke:0.2px;color:#000;letter-spacing:-0.078px;">Elipsa: Levým tlačítkem nakreslete elipsu (pravým barvou pozadí). Držením Shift vynuťte kruh.</span>
<div class="a" style="left:695px;top:686px;width:1px;height:19px;background:#d0cdc0;"></div>
<div class="a" style="left:696px;top:686px;width:1px;height:19px;background:#fbfaf4;"></div>
<svg class="a" style="left:698px;top:687px;" width="17" height="17" viewBox="0 0 17 17"><path d="M7 2.5h9M13.5 0.5l2.5 2-2.5 2M7 0v5" stroke="#000" fill="none" stroke-width="1.1"/><path d="M3 5.5v9M1 12l2 2.5 2-2.5M0.5 5.5h5M0.5 15h5" stroke="#000" fill="none" stroke-width="1.1"/><path d="M8.5 6.5h4.5l2 2v7h-6.5z" fill="#f4f4f4" stroke="#8a8a8a"/></svg>
<span class="t" style="left:718.27px;top:688px;font-size:11px;line-height:14px;-webkit-text-stroke:0.2px;color:#000;letter-spacing:-0.122px;">20,00cm x 15,00cm</span>
<div class="a" style="left:831px;top:686px;width:1px;height:19px;background:#d0cdc0;"></div>
<div class="a" style="left:832px;top:686px;width:1px;height:19px;background:#fbfaf4;"></div>
<svg class="a" style="left:834px;top:687px;" width="17" height="17" viewBox="0 0 17 17"><path d="M4.5 0v8M0.5 4h8" stroke="#000" stroke-width="1.2"/><path d="M9 3.5h6M3.5 9v6" stroke="#555" stroke-dasharray="1 1"/><path d="M6.5 6.5h5l2.5 2.5v7h-7.5z" fill="#f6f6f6" stroke="#8a8a8a"/></svg>
<span class="t" style="left:853.77px;top:688px;font-size:11px;line-height:14px;-webkit-text-stroke:0.2px;color:#000;letter-spacing:-0.015px;">5,08cm, -0,93cm</span>
<div class="a" style="left:0px;top:706px;width:979px;height:30px;background:linear-gradient(#3a84ee 0%,#2c6ee6 8%,#2459da 20%,#2457d8 50%,#2355d6 80%,#1d49c2 92%,#183ea6 100%);"></div>
<div class="a" style="left:-60px;top:706px;width:113.5px;height:30px;background:linear-gradient(#4f9a4f 0%,#5aae5a 10%,#42a042 22%,#3a9a3a 45%,#379637 65%,#2f8a2f 88%,#276f27 100%);border-radius:0 5px 5px 0 / 0 15px 15px 0;box-shadow:inset -6px 0 8px -3px rgba(0,40,0,0.45), 1px 0 2px rgba(0,0,60,0.35);"></div>
<span class="t" style="left:-11.5px;top:711px;font-size:17px;line-height:22px;font-weight:bold;font-style:italic;color:#fff;letter-spacing:0.7px;text-shadow:1px 1px 1px #1a4a1a;">start</span>
<div class="a" style="left:65px;top:710px;width:157px;height:23px;background:linear-gradient(#5a9cf8 0%,#3c82f2 12%,#3a7ef0 50%,#3478ea 85%,#2c68d8 100%);border-radius:3px;box-shadow:inset 0 0 0 1px rgba(255,255,255,0.1), 1px 1px 1px rgba(0,0,60,0.3);"></div>
<div class="a" style="left:224px;top:710px;width:159px;height:23px;background:linear-gradient(#5a9cf8 0%,#3c82f2 12%,#3a7ef0 50%,#3478ea 85%,#2c68d8 100%);border-radius:3px;box-shadow:inset 0 0 0 1px rgba(255,255,255,0.1), 1px 1px 1px rgba(0,0,60,0.3);"></div>
<div class="a" style="left:385px;top:710px;width:157px;height:23px;background:linear-gradient(#5a9cf8 0%,#3c82f2 12%,#3a7ef0 50%,#3478ea 85%,#2c68d8 100%);border-radius:3px;box-shadow:inset 0 0 0 1px rgba(255,255,255,0.1), 1px 1px 1px rgba(0,0,60,0.3);"></div>
<div class="a" style="left:544px;top:710px;width:159px;height:23px;background:linear-gradient(#1a4aa8 0%,#1e52b8 15%,#1e54bc 85%,#2258c0 100%);border-radius:3px;box-shadow:inset 1px 1px 2px rgba(0,0,40,0.45);"></div>
<svg class="a" style="left:73px;top:713px;" width="16" height="17" viewBox="0 0 16 17"><rect x="0.5" y="0.5" width="15" height="16" rx="1" fill="#fbe9b8" stroke="#e8b060"/><circle cx="8" cy="8.5" r="4.8" fill="#fdf6dc" stroke="#b8601a" stroke-width="1.3"/><path d="M8 5.5v3.5h2.5" stroke="#b8601a" fill="none" stroke-width="1.2"/></svg>
<span class="t" style="left:91.5px;top:714px;font-size:11px;line-height:14px;-webkit-text-stroke:0.2px;color:#fff;letter-spacing:0.072px;">Doručená pošta - Mic...</span>
<svg class="a" style="left:233px;top:713px;" width="16" height="16" viewBox="0 0 16 16"><circle cx="8" cy="8" r="7.5" fill="#e8463a"/><path d="M8 8L1.5 4.2A7.5 7.5 0 0 0 4.5 14.6z" fill="#3aa04a"/><path d="M8 8l-3.5 6.6A7.5 7.5 0 0 0 15.5 8z" fill="#f4c830"/><circle cx="8" cy="8" r="3.5" fill="#fff"/><circle cx="8" cy="8" r="2.6" fill="#4a86e8"/></svg>
<span class="t" style="left:251.5px;top:714px;font-size:11px;line-height:14px;-webkit-text-stroke:0.2px;color:#fff;letter-spacing:-0.018px;">Malování - problém s ...</span>
<svg class="a" style="left:393px;top:712px;" width="16" height="17" viewBox="0 0 16 17"><ellipse cx="8" cy="8.5" rx="7.5" ry="8" fill="#d81c1c"/><ellipse cx="8" cy="8.5" rx="3.2" ry="5.5" fill="#fff"/><ellipse cx="8" cy="8.5" rx="7.5" ry="8" fill="none" stroke="#8a0a0a" stroke-width="0.8"/></svg>
<span class="t" style="left:411.92px;top:714px;font-size:11px;line-height:14px;-webkit-text-stroke:0.2px;color:#fff;letter-spacing:0.099px;">1020:639 - Rádio Čer...</span>
<svg class="a" style="left:554px;top:714px;" width="14" height="15" viewBox="0 0 14 15"><rect x="0.5" y="0.5" width="11" height="14" fill="#f4f4f4" stroke="#c0c4d0"/><rect x="1.5" y="1.5" width="9" height="7" fill="#4a7ad8"/><path d="M3 11.5h6" stroke="#222" stroke-width="2"/><path d="M13 3l-6 8" stroke="#8a3a1a" stroke-width="1.5"/></svg>
<span class="t" style="left:572.5px;top:715px;font-size:11px;line-height:14px;-webkit-text-stroke:0.2px;color:#fff;letter-spacing:0.147px;">Bez_nazvu (98%) - P...</span>
<div class="a" style="left:796px;top:706px;width:183px;height:30px;background:linear-gradient(#1ea0f0 0%,#19a0f2 8%,#1292e8 30%,#1290e6 60%,#1088e0 85%,#0d78cc 94%,#0a58a8 100%);box-shadow:inset 1px 0 0 #0f48a8;"></div>
<svg class="a" style="left:808px;top:715px;" width="13" height="10" viewBox="0 0 13 10"><rect x="0.5" y="0.5" width="12" height="9" fill="#f8e08a" stroke="#d8a830"/><path d="M0.5 0.5l6 5 6-5" fill="none" stroke="#c89820"/></svg>
<svg class="a" style="left:825px;top:713px;" width="15" height="15" viewBox="0 0 15 15"><rect x="0.5" y="0.5" width="14" height="14" rx="1" fill="#fbe9b8" stroke="#e8b060"/><circle cx="7.5" cy="7.5" r="4.5" fill="#fdf6dc" stroke="#b8601a" stroke-width="1.2"/><path d="M7.5 4.5v3h2.5" stroke="#b8601a" fill="none"/></svg>
<svg class="a" style="left:843px;top:712px;" width="16" height="17" viewBox="0 0 16 17"><rect x="0.5" y="2.5" width="15" height="13" rx="2" fill="#d01818" stroke="#6a0a0a"/><path d="M11 6.5c-4-1.5-6 0.5-6 2.5s2 4 6 2.5" fill="none" stroke="#fff" stroke-width="2"/><path d="M2 0l3 2.5 3-2.5" fill="none" stroke="#e8d020" stroke-width="1.3"/></svg>
<svg class="a" style="left:862px;top:713px;" width="15" height="15" viewBox="0 0 15 15"><circle cx="7.5" cy="7.5" r="7" fill="#f08a1a"/><path d="M10.5 10.5V7.5a3 3 0 1 0-3 3h3" fill="none" stroke="#fff" stroke-width="1.8"/></svg>
<svg class="a" style="left:879px;top:712px;" width="15" height="17" viewBox="0 0 15 17"><rect x="6.5" y="0.5" width="8" height="7" fill="#7ab8f0" stroke="#d8e8f8"/><rect x="0.5" y="6.5" width="8" height="7" fill="#5a9ae0" stroke="#d8e8f8"/><path d="M3 16h4M9 10h4" stroke="#d0d8e8" stroke-width="1.5"/></svg>
<svg class="a" style="left:897px;top:712px;" width="16" height="17" viewBox="0 0 16 17"><rect x="0" y="0" width="16" height="17" rx="1" fill="#1c3a8a"/><path d="M3 13V8.5c0-3 5-3 5 0V13M8 8.5c0-3 5-3 5 0V13" fill="none" stroke="#fff" stroke-width="2.2"/></svg>
<svg class="a" style="left:915px;top:711px;" width="17" height="18" viewBox="0 0 17 18"><ellipse cx="8.5" cy="10.5" rx="8" ry="6.5" fill="#1a1a08" stroke="#c8b820" stroke-width="1.2"/><ellipse cx="8.5" cy="10.5" rx="5" ry="3" fill="#fff"/><circle cx="8.5" cy="10.5" r="2" fill="#111"/><path d="M6 3.5h5M8.5 1v3.5" stroke="#c8b820" stroke-width="1.5"/></svg>
<span class="t" style="left:937.42px;top:714px;font-size:11px;line-height:14px;-webkit-text-stroke:0.2px;color:#fff;letter-spacing:0.159px;">10:35</span>
<div class="a" style="left:905px;top:0px;width:74px;height:68px;background:#5e88cc;"></div>
<div class="a" style="left:907px;top:13px;width:70px;height:53px;background:#ffffff;border:1px solid #0c1636;box-shadow:0 0 0 0.5px rgba(12,22,54,0.5), inset 0 0 0 0.5px rgba(12,22,54,0.4);"></div>
<svg class="a" style="left:911.5px;top:-0.5px;" width="9.5" height="9.5" viewBox="0 0 11 11"><path d="M5.5 0l1.5 3.5 4-0.5-2.5 3 2.5 3-4-0.5-1.5 3-1.5-3-4 0.5 2.5-3-2.5-3 4 0.5z" fill="#ffae1c"/><circle cx="5.5" cy="5.5" r="2" fill="#ffd870"/></svg>
</div></body></html>
